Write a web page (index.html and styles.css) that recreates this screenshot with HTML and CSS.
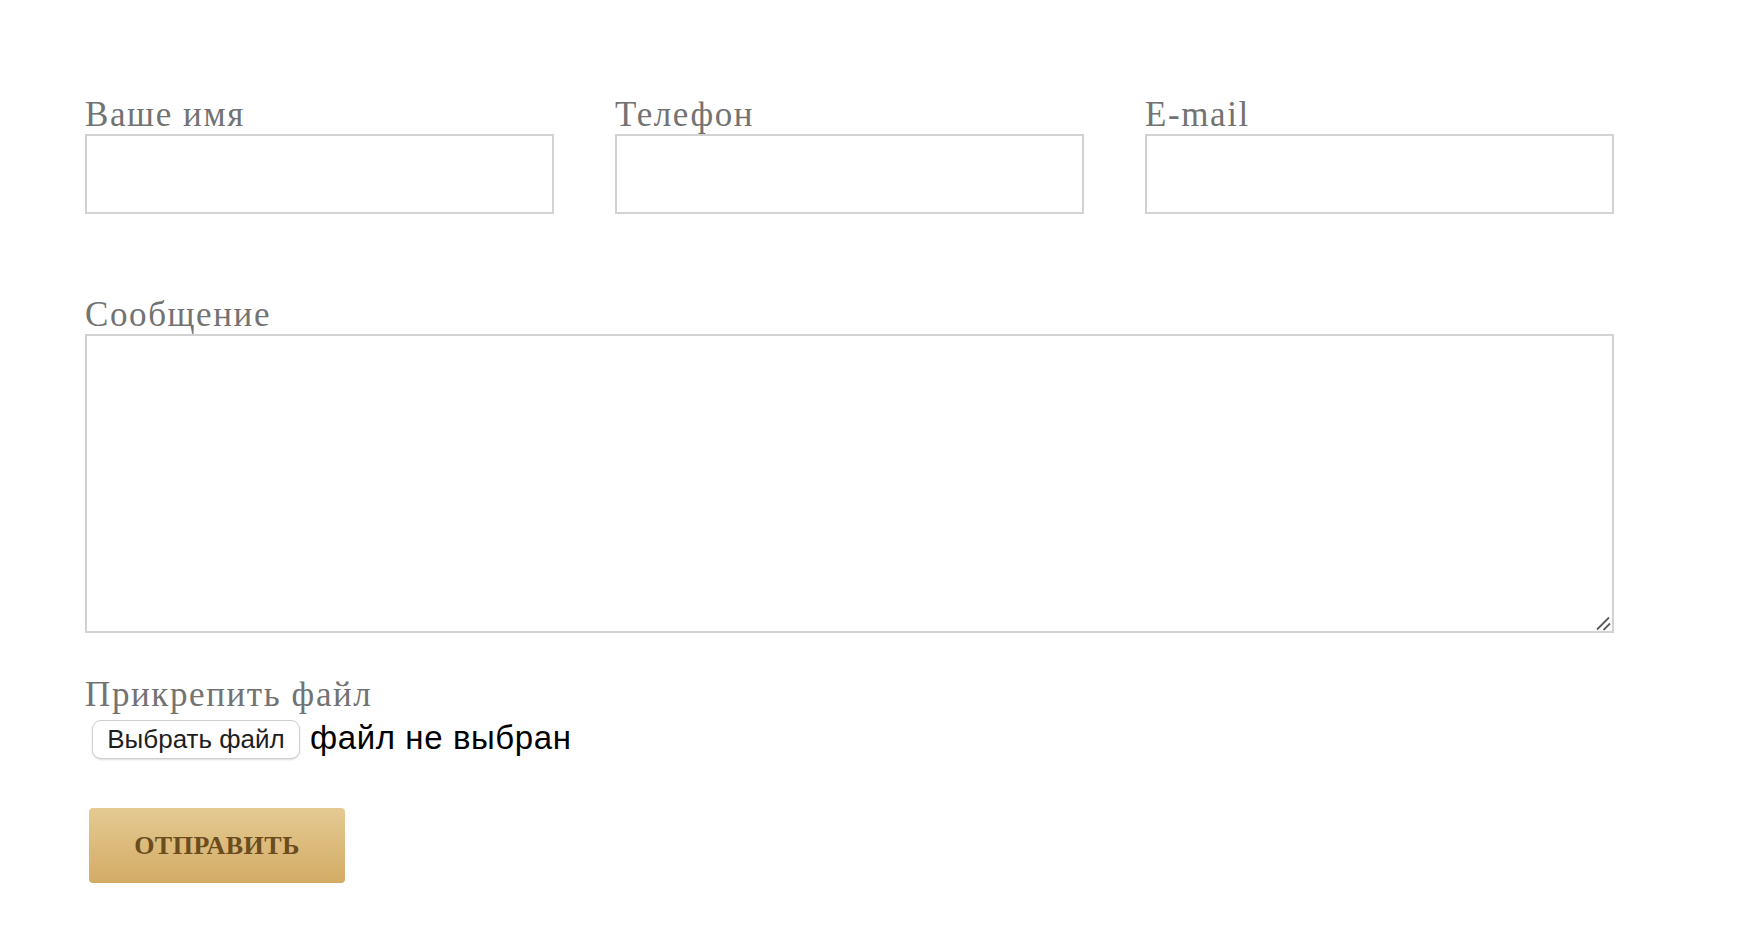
FILE: index.html
```html
<!DOCTYPE html>
<html lang="ru">
<head>
<meta charset="utf-8">
<title>Форма</title>
<link rel="stylesheet" href="styles.css">
</head>
<body>
<form class="form">
  <div class="row3">
    <div class="field">
      <label class="lbl">Ваше имя</label>
      <input class="inp" type="text">
    </div>
    <div class="field">
      <label class="lbl">Телефон</label>
      <input class="inp" type="text">
    </div>
    <div class="field">
      <label class="lbl">E-mail</label>
      <input class="inp" type="text">
    </div>
  </div>
  <div class="field msg">
    <label class="lbl">Сообщение</label>
    <div class="ta-wrap">
      <textarea class="ta"></textarea>
      <svg class="grip" viewBox="0 0 16 16" width="16" height="16"><line x1="1" y1="14.5" x2="13" y2="2.5" stroke="#5c5c5c" stroke-width="1.8"/><line x1="7.5" y1="15" x2="14" y2="8.5" stroke="#5c5c5c" stroke-width="1.8"/></svg>
    </div>
  </div>
  <div class="field file">
    <label class="lbl">Прикрепить файл</label>
    <div class="file-row">
      <span class="file-btn">Выбрать файл</span>
      <span class="file-name">файл не выбран</span>
    </div>
  </div>
  <button class="submit" type="button">ОТПРАВИТЬ</button>
</form>
</body>
</html>
```

FILE: styles.css
```css
body {
  margin: 0;
  background: #ffffff;
}

.form {
  padding: 95px 0 0 85px;
  width: 1529px;
}

.row3 {
  display: grid;
  grid-template-columns: repeat(3, 1fr);
  column-gap: 61px;
}

.lbl {
  display: block;
  font-family: "Liberation Serif", serif;
  font-size: 35px;
  line-height: 39px;
  color: #737373;
  letter-spacing: 1.6px;
  white-space: nowrap;
}

.inp {
  display: block;
  box-sizing: border-box;
  width: 100%;
  height: 80px;
  margin: 0;
  padding: 0 12px;
  border: 2px solid #d2d2d2;
  border-radius: 0;
  background: #ffffff;
  outline: none;
}

.msg {
  margin-top: 81px;
}

.ta-wrap {
  position: relative;
  height: 299px;
}

.ta {
  display: block;
  box-sizing: border-box;
  width: 100%;
  height: 299px;
  margin: 0;
  border: 2px solid #d2d2d2;
  border-radius: 0;
  resize: none;
  outline: none;
  background: #ffffff;
}

.grip {
  position: absolute;
  right: 2px;
  bottom: 2px;
}

.file {
  margin-top: 42px;
}

.file-row {
  display: flex;
  align-items: center;
  gap: 10px;
  margin-top: 6px;
  padding-left: 7px;
}

.file-btn {
  box-sizing: border-box;
  display: flex;
  align-items: center;
  justify-content: center;
  width: 208px;
  height: 39px;
  border: 1px solid #d0d0d0;
  border-radius: 9px;
  background: #ffffff;
  box-shadow: 0 1px 2px rgba(0, 0, 0, 0.14);
  font-family: "Liberation Sans", Arial, sans-serif;
  font-size: 26px;
  color: #1e1e1e;
}

.file-name {
  font-family: "Liberation Sans", Arial, sans-serif;
  font-size: 33px;
  letter-spacing: 0.6px;
  color: #000000;
  position: relative;
  top: -2px;
}

.submit {
  display: block;
  width: 256px;
  height: 75px;
  margin: 49px 0 0 4px;
  padding: 0;
  border: 0;
  border-radius: 4px;
  background: linear-gradient(to bottom, #e4ca93, #d3ab65);
  font-family: "Liberation Serif", serif;
  font-weight: bold;
  font-size: 26px;
  letter-spacing: 0.5px;
  color: #6b4c1d;
  cursor: pointer;
}
```
